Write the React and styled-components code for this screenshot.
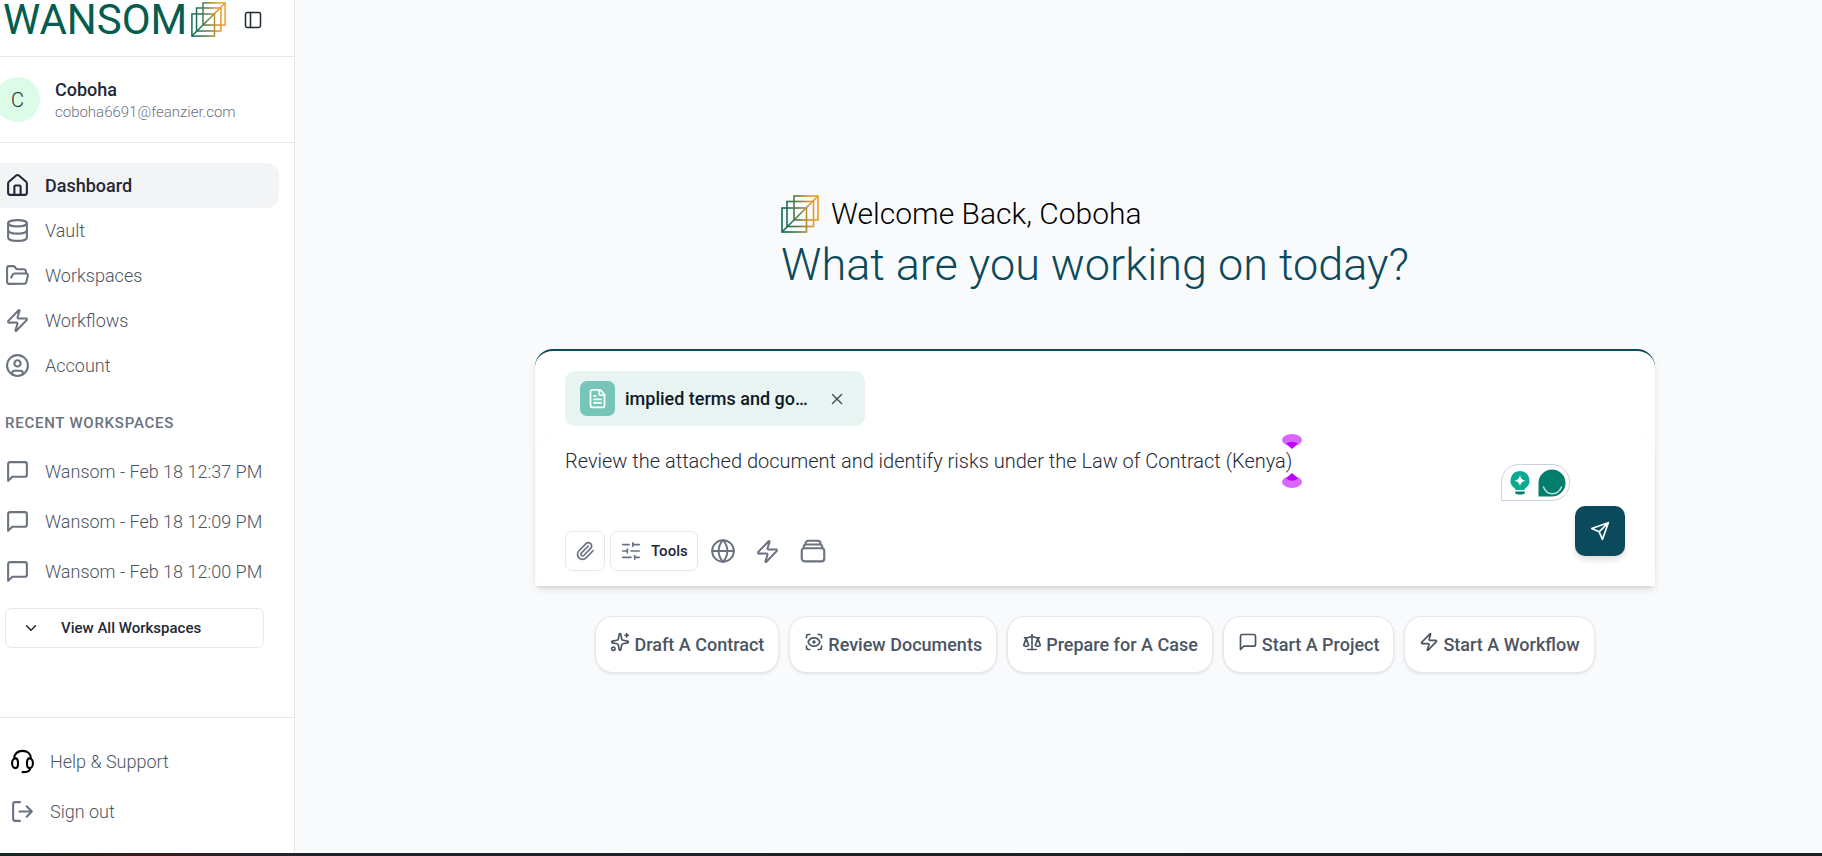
import React, { useState } from 'react'
import styled, { createGlobalStyle, css } from 'styled-components'
import {
  ChevronDown, CircleUser, Database, FileText, FolderOpen, Globe, House,
  PanelLeft, Paperclip, Scale, ScanEye, SlidersHorizontal, Sparkles, X, Zap,
} from 'lucide-react'

const GlobalStyle = createGlobalStyle`
  *, *::before, *::after {
    box-sizing: border-box;
  }
  body {
    margin: 0;
    font-family: Roboto, "Liberation Sans", sans-serif;
    font-weight: 300;
    font-size: 18px;
    color: #1f2937;
    background: #f9fafc;
    overflow-x: hidden;
  }
  button, textarea {
    font: inherit;
    color: inherit;
  }
  button {
    cursor: pointer;
  }
  a {
    color: inherit;
    text-decoration: none;
  }
`

const Page = styled.div`
  display: flex;
  flex-direction: column;
  min-height: 100vh;
`

const Shell = styled.div`
  display: flex;
  flex: 1;
`

const BottomEdge = styled.div`
  height: 3px;
  background: linear-gradient(90deg, #12271f 0, #3a1a1a 150px, #22222a 260px, #1b1f22 100%);
`

/* ---- sidebar ---- */

const Sidebar = styled.aside`
  display: flex;
  flex-direction: column;
  flex: none;
  width: 320px;
  margin-left: -25px;
  background: #fff;
  border-right: 1px solid #e5e7eb;
`

const Brand = styled.header`
  display: flex;
  align-items: flex-start;
  height: 57px;
  padding: 2px 0 0 28px;
  border-bottom: 1px solid #e5e7eb;
`

const BrandName = styled.span`
  width: 188px;
  font-weight: 400;
  font-size: 42px;
  line-height: 36px;
  color: #045d4e;
`

const PanelButton = styled.button`
  display: flex;
  margin: 8px 0 0 17px;
  padding: 0;
  border: 0;
  background: none;
`

const Profile = styled.section`
  display: flex;
  align-items: center;
  gap: 15px;
  height: 86px;
  padding: 0 20px;
  border-bottom: 1px solid #e5e7eb;
`

const Avatar = styled.span`
  display: flex;
  align-items: center;
  justify-content: center;
  width: 45px;
  height: 45px;
  border-radius: 50%;
  background: #dcfce7;
  font-size: 20px;
`

const ProfileText = styled.div`
  padding-top: 2px;
  line-height: 22px;
`

const ProfileName = styled.div`
  font-weight: 500;
`

const ProfileMail = styled.div`
  font-size: 15px;
  color: #6b7280;
`

const Nav = styled.nav`
  padding: 20px 15px 0;
`

const NavLink = styled.a`
  display: flex;
  align-items: center;
  gap: 15px;
  height: ${(p) => (p.$tall ? 50 : 45)}px;
  padding: 0 15px;
  border-radius: 12px;
  color: #4b5563;

  svg {
    color: ${(p) => (p.$dark ? '#000' : '#6b7280')};
  }

  ${(p) => p.$active && css`
    color: #1f2937;
    font-weight: 500;
    background: #f3f4f6;
    svg {
      color: #1f2937;
    }
  `}
`

const SectionTitle = styled.h2`
  margin: 24px 15px 12px;
  font-weight: 500;
  font-size: 15px;
  line-height: 22px;
  letter-spacing: 0.05em;
  text-transform: uppercase;
  color: #6b7280;
`

const ViewAll = styled.button`
  display: flex;
  align-items: center;
  gap: 21px;
  width: 259px;
  height: 40px;
  margin: 12px 15px 0;
  padding: 0 16px;
  border: 1px solid #e5e7eb;
  border-radius: 7px;
  background: #fff;
  font-weight: 500;
  font-size: 15px;
`

const SidebarFoot = styled.nav`
  margin-top: auto;
  padding: 18px 20px 17px;
  border-top: 1px solid #e5e7eb;
`

/* ---- main column ---- */

const Main = styled.main`
  flex: 1;
  display: flex;
  flex-direction: column;
  align-items: center;
  padding: 192px 20px 40px 93px;
`

const Greeting = styled.div`
  color: #000;
`

const Welcome = styled.div`
  display: flex;
  align-items: center;
  gap: 12px;
  font-size: 30px;
  line-height: 44px;
`

const Question = styled.h1`
  margin: 0;
  font-weight: 300;
  font-size: 45px;
  line-height: 58px;
  color: #0a4a5c;
`

const Composer = styled.form`
  width: 100%;
  max-width: 1120px;
  margin-top: 55px;
  padding-top: 20px;
  border-top: 2px solid #0a4a5c;
  border-radius: 18px 18px 0 0;
  background: #fff;
  box-shadow: 0 4px 7px -1px rgba(0, 0, 0, 0.12), 0 2px 4px -2px rgba(0, 0, 0, 0.1);
`

const FilePill = styled.div`
  display: flex;
  align-items: center;
  width: 300px;
  height: 55px;
  margin-left: 30px;
  padding: 0 19px 0 15px;
  border-radius: 10px;
  background: #e7f4f1;
  font-weight: 500;
  color: #111827;
`

const FileTile = styled.span`
  display: flex;
  align-items: center;
  justify-content: center;
  width: 35px;
  height: 35px;
  margin-right: 10px;
  border-radius: 7px;
  background: #75c6b8;
  color: #fff;
`

const RemoveFile = styled.button`
  display: flex;
  margin-left: auto;
  padding: 0;
  border: 0;
  background: none;
  color: #4b5563;
`

const Field = styled.div`
  position: relative;
  height: 150px;
  margin-top: 10px;
  padding: 10px 29px 14px;
  border: 1px solid #fcfcfd;
  border-radius: 18px;
  display: flex;
  flex-direction: column;
  justify-content: space-between;
`

const Prompt = styled.textarea`
  display: block;
  width: 100%;
  height: 56px;
  padding: 0;
  border: 0;
  outline: 0;
  resize: none;
  background: none;
  font-size: 20px;
  line-height: 28px;
`

const Tools = styled.div`
  display: flex;
  align-items: center;
  gap: 5px;
`

const ToolButton = styled.button`
  display: flex;
  align-items: center;
  justify-content: center;
  gap: 9px;
  min-width: 40px;
  height: 40px;
  padding: 0 ${(p) => (p.$wide ? 9 : 0)}px;
  border: ${(p) => (p.$plain ? '0' : '1px solid #e5e7eb')};
  border-radius: 7px;
  background: none;
  font-weight: 500;
  font-size: 15px;

  svg {
    color: #6b7280;
  }
`

const SendButton = styled.button`
  position: absolute;
  right: 29px;
  bottom: 29px;
  display: flex;
  align-items: center;
  justify-content: center;
  width: 50px;
  height: 50px;
  padding: 0;
  border: 0;
  border-radius: 10px;
  background: #0a4a5c;
  color: #fff;
  box-shadow: 0 4px 7px -1px rgba(0, 0, 0, 0.15);
`

const Assistant = styled.div`
  position: absolute;
  right: 84px;
  top: 27px;
  display: flex;
  align-items: center;
  gap: 8px;
  width: 69px;
  height: 37px;
  padding-left: 8px;
  border: 1px solid #cfcfe0;
  border-radius: 18px 18px 18px 0;
  background: #fff;
`

const Caret = styled.svg`
  position: absolute;
  left: 746px;
  top: -3px;
  pointer-events: none;
`

const Chips = styled.div`
  display: flex;
  flex-wrap: wrap;
  justify-content: center;
  gap: 10px;
  margin-top: 30px;
`

const Chip = styled.button`
  display: flex;
  align-items: center;
  gap: 4px;
  height: 57px;
  padding: 0 14px;
  border: 1px solid #e5e7eb;
  border-radius: 18px;
  background: #fff;
  font-weight: 500;
  color: #4b5563;
  box-shadow: 0 1px 3px rgba(0, 0, 0, 0.1);

  svg {
    margin-bottom: 6px;
  }
`

/* ---- drawings ---- */

const Mark = ({ size, id }) => (
  <svg width={size} height={size} viewBox="0 0 38 38" fill="none" stroke={`url(#${id})`} strokeWidth="1.6" aria-hidden="true">
    <defs>
      <linearGradient id={id} gradientUnits="userSpaceOnUse" x1="0" y1="20" x2="38" y2="18">
        <stop offset="0.1" stopColor="#0b6b57" />
        <stop offset="0.45" stopColor="#5f7c44" />
        <stop offset="0.75" stopColor="#d9962a" />
        <stop offset="1" stopColor="#eda11e" />
      </linearGradient>
    </defs>
    <rect x="1" y="13" width="24.500" height="24" />
    <rect x="6" y="6.500" width="26.500" height="25" />
    <rect x="13" y="1" width="24" height="24" />
    <path d="M1 37 37 1" />
  </svg>
)

const LineIcon = ({ size = 25, strokeWidth = 2, d }) => (
  <svg
    width={size} height={size} viewBox="0 0 24 24" fill="none" stroke="currentColor"
    strokeWidth={strokeWidth} strokeLinecap="round" strokeLinejoin="round" aria-hidden="true"
  >
    <path d={d} />
  </svg>
)

const Bubble = (props) => (
  <LineIcon {...props} d="M21 15a2 2 0 0 1-2 2H7l-4 4V5a2 2 0 0 1 2-2h14a2 2 0 0 1 2 2z" />
)

const Support = () => (
  <LineIcon d="M4 9C4 4.500 7.500 1.800 12 1.800S20 4.500 20 9M5.300 9C3.300 9 2 11.200 2 13.700s1.300 4.700 3.300 4.700 2.400-2.200 2.400-4.700S7.300 9 5.300 9zM18.700 9c-2 0-2.400 2.200-2.400 4.700s.4 4.700 2.400 4.700 3.300-2.200 3.300-4.700S20.700 9 18.700 9zM19.500 18.400c0 2.600-2.500 3.800-7.500 3.800" />
)

const SignOut = () => (
  <LineIcon d="M9.500 21H5a2 2 0 0 1-2-2V5a2 2 0 0 1 2-2h4.500M16 17l5-5-5-5M21 12H9" />
)

const Plane = () => (
  <LineIcon size={20} d="M22 2 2 9l9 4 4 9zM22 2 11 13" />
)

const Stack = () => (
  <LineIcon
    size={30}
    strokeWidth={1.7}
    d="M6 6.878V6a2.250 2.250 0 0 1 2.250-2.250h7.500A2.250 2.250 0 0 1 18 6v.878m-12 0c.235-.083.487-.128.750-.128h10.500c.263 0 .515.045.750.128m-12 0A2.250 2.250 0 0 0 4.500 9v.878m13.500-3A2.250 2.250 0 0 1 19.500 9v.878m0 0a2.246 2.246 0 0 0-.750-.128H5.250c-.263 0-.515.045-.750.128m15 0A2.250 2.250 0 0 1 21 12v6a2.250 2.250 0 0 1-2.250 2.250H5.250A2.250 2.250 0 0 1 3 18v-6c0-.980.626-1.813 1.500-2.122"
  />
)

const Bulb = () => (
  <svg width="20" height="24" viewBox="0 0 20 24" aria-hidden="true">
    <path d="M10 0a9.500 9.500 0 0 1 6 16.800c-1 .7-1.300 1.200-1.500 2.200h-9c-.2-1-.5-1.500-1.500-2.200A9.500 9.500 0 0 1 10 0z" fill="#08ab92" />
    <path d="M10 4c.8 3.600 2 4.800 5.500 5.700-3.500.9-4.700 2-5.500 5.600-.8-3.600-2-4.700-5.500-5.600C8 8.800 9.200 7.600 10 4z" fill="#fff" />
    <path d="M5 20.500h10c0 2-1 3-3 3H8c-2 0-3-1-3-3z" fill="#08806f" />
  </svg>
)

const Smile = () => (
  <svg width="28" height="28" viewBox="0 0 28 28" aria-hidden="true">
    <path d="M14 .5a13.500 13.500 0 1 1 0 27H.5V14A13.500 13.500 0 0 1 14 .5z" fill="#037e6c" />
    <path d="M5.500 18c3.500 9 14 9 18 0" fill="none" stroke="#c9e5e0" strokeWidth="1.500" strokeLinecap="round" />
  </svg>
)

const navItems = [
  { label: 'Dashboard', Icon: House, active: true },
  { label: 'Vault', Icon: Database },
  { label: 'Workspaces', Icon: FolderOpen },
  { label: 'Workflows', Icon: Zap },
  { label: 'Account', Icon: CircleUser },
]

const recent = ['Wansom - Feb 18 12:37 PM', 'Wansom - Feb 18 12:09 PM', 'Wansom - Feb 18 12:00 PM']

const actions = [
  { label: 'Draft A Contract', Icon: Sparkles },
  { label: 'Review Documents', Icon: ScanEye },
  { label: 'Prepare for A Case', Icon: Scale },
  { label: 'Start A Project', Icon: Bubble },
  { label: 'Start A Workflow', Icon: Zap },
]

const SideMenu = () => (
  <Sidebar>
    <Brand>
      <BrandName>WANSOM</BrandName>
      <Mark size={35} id="mark-side" />
      <PanelButton type="button" aria-label="Toggle sidebar">
        <PanelLeft size={20} strokeWidth={1.8} />
      </PanelButton>
    </Brand>
    <Profile>
      <Avatar>C</Avatar>
      <ProfileText>
        <ProfileName>Coboha</ProfileName>
        <ProfileMail>coboha6691@feanzier.com</ProfileMail>
      </ProfileText>
    </Profile>
    <Nav>
      {navItems.map(({ label, Icon, active }) => (
        <NavLink href="#" key={label} $active={active}>
          <Icon size={25} strokeWidth={2} />
          {label}
        </NavLink>
      ))}
      <SectionTitle>Recent Workspaces</SectionTitle>
      {recent.map((name) => (
        <NavLink href="#" key={name} $tall>
          <Bubble />
          {name}
        </NavLink>
      ))}
      <ViewAll type="button">
        <ChevronDown size={18} strokeWidth={2} />
        View All Workspaces
      </ViewAll>
    </Nav>
    <SidebarFoot>
      <NavLink href="#" $tall $dark>
        <Support />
        Help &amp; Support
      </NavLink>
      <NavLink href="#" $tall>
        <SignOut />
        Sign out
      </NavLink>
    </SidebarFoot>
  </Sidebar>
)

const PromptBox = () => {
  const [text, setText] = useState('Review the attached document and identify risks under the Law of Contract (Kenya)')

  return (
    <Composer onSubmit={(e) => e.preventDefault()}>
      <FilePill>
        <FileTile><FileText size={21} strokeWidth={2} /></FileTile>
        implied terms and go…
        <RemoveFile type="button" aria-label="Remove file">
          <X size={18} strokeWidth={2} />
        </RemoveFile>
      </FilePill>
      <Field>
        <Prompt aria-label="Prompt" value={text} spellCheck={false} onChange={(e) => setText(e.target.value)} />
        <Tools>
          <ToolButton type="button" aria-label="Attach file">
            <Paperclip size={20} strokeWidth={2} />
          </ToolButton>
          <ToolButton type="button" $wide>
            <SlidersHorizontal size={22} strokeWidth={1.8} />
            Tools
          </ToolButton>
          <ToolButton type="button" $plain aria-label="Web search">
            <Globe size={26} strokeWidth={1.8} />
          </ToolButton>
          <ToolButton type="button" $plain aria-label="Workflows">
            <Zap size={25} strokeWidth={2} />
          </ToolButton>
          <ToolButton type="button" $plain aria-label="Library">
            <Stack />
          </ToolButton>
        </Tools>
        <Caret width="20" height="55" viewBox="0 0 20 55" aria-hidden="true">
          <ellipse cx="10" cy="6" rx="10" ry="6" fill="#d966ff" />
          <path d="M4 9.500Q10 6 16 9.500L10 15z" fill="#bf00ff" />
          <ellipse cx="10" cy="48" rx="10" ry="6" fill="#d966ff" />
          <path d="M4 44.500Q10 49 16 44.500L10 39z" fill="#bf00ff" />
        </Caret>
        <Assistant>
          <Bulb />
          <Smile />
        </Assistant>
        <SendButton type="submit" aria-label="Send">
          <Plane />
        </SendButton>
      </Field>
    </Composer>
  )
}

const App = () => (
  <>
    <GlobalStyle />
    <Page>
      <Shell>
        <SideMenu />
        <Main>
          <Greeting>
            <Welcome>
              <Mark size={38} id="mark-main" />
              Welcome Back, Coboha
            </Welcome>
            <Question>What are you working on today?</Question>
          </Greeting>
          <PromptBox />
          <Chips>
            {actions.map(({ label, Icon }) => (
              <Chip type="button" key={label}>
                <Icon size={20} strokeWidth={2} />
                {label}
              </Chip>
            ))}
          </Chips>
        </Main>
      </Shell>
      <BottomEdge />
    </Page>
  </>
)

export default App
